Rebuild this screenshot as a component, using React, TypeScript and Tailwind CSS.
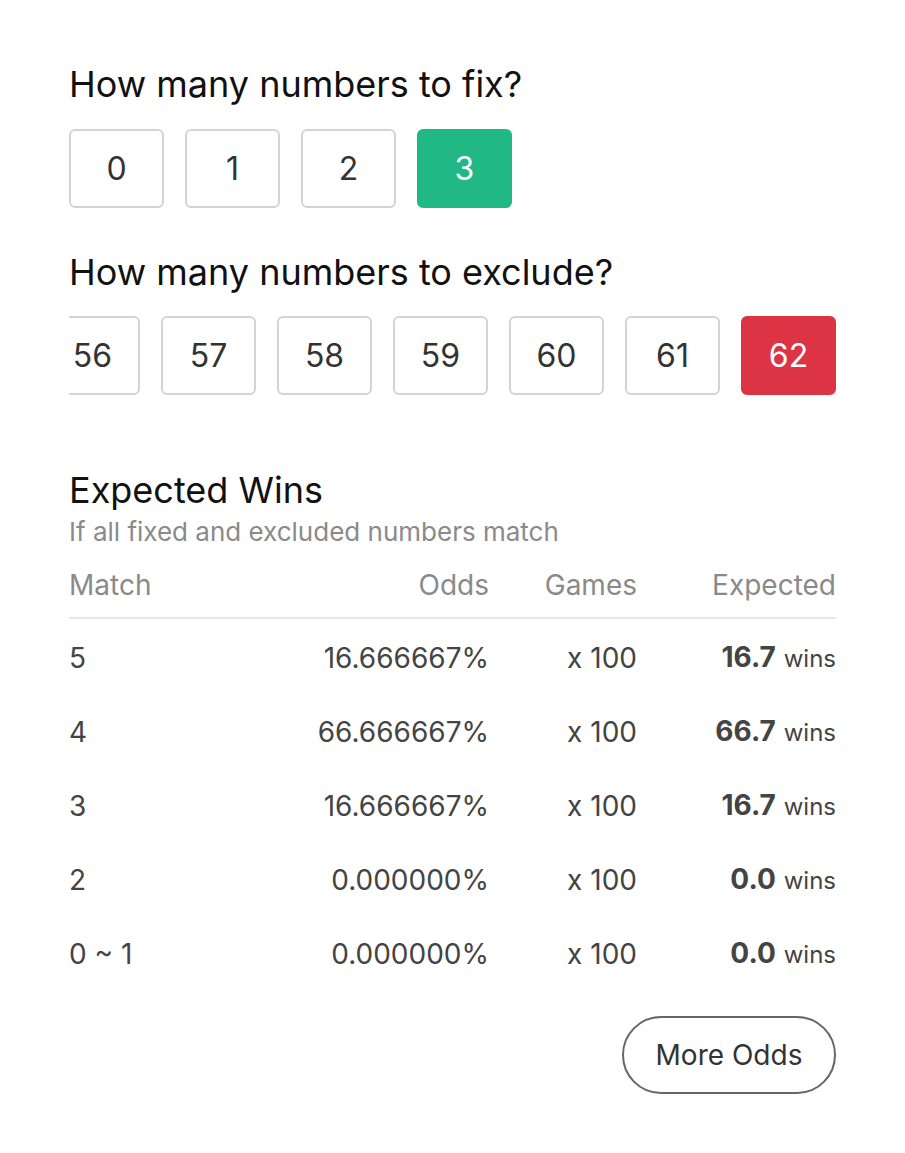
import { useState } from 'react'

const font = { fontFamily: 'Inter, "Noto Sans", sans-serif' }

const rows = [
  { match: '5', odds: '16.666667%', games: 'x 100', expected: '16.7' },
  { match: '4', odds: '66.666667%', games: 'x 100', expected: '66.7' },
  { match: '3', odds: '16.666667%', games: 'x 100', expected: '16.7' },
  { match: '2', odds: '0.000000%', games: 'x 100', expected: '0.0' },
  { match: '0 ~ 1', odds: '0.000000%', games: 'x 100', expected: '0.0' },
]

function NumButton({ n, active, tone, onClick }: { n: number; active: boolean; tone: 'green' | 'red'; onClick: () => void }) {
  const on = tone === 'green' ? 'bg-[#22b886] border-[#22b886] text-white' : 'bg-[#dc3444] border-[#dc3444] text-white'
  return (
    <button
      onClick={onClick}
      className={`flex h-[79px] w-[95px] shrink-0 items-center justify-center rounded-[6px] border-2 text-[32px] ${
        active ? on : 'border-[#d4d4d4] bg-white text-[#333]'
      }`}
    >
      {n}
    </button>
  )
}

export default function App() {
  const [fix, setFix] = useState(3)
  const [exclude, setExclude] = useState(62)
  // only the tail of the 0..62 strip is in view
  const excludeOptions = [56, 57, 58, 59, 60, 61, 62]

  return (
    <div style={font} className="min-h-screen bg-white px-[69px] pt-[62px] text-[#111]">
      <h2 className="text-[36px] leading-[44px]">How many numbers to fix?</h2>
      <div className="mt-[23px] flex gap-[21px]">
        {[0, 1, 2, 3].map(n => (
          <NumButton key={n} n={n} active={fix === n} tone="green" onClick={() => setFix(n)} />
        ))}
      </div>

      <h2 className="mt-[42px] text-[36px] leading-[44px]">How many numbers to exclude?</h2>
      <div className="mt-[22px] flex justify-end gap-[21px] overflow-hidden">
        {excludeOptions.map(n => (
          <NumButton key={n} n={n} active={exclude === n} tone="red" onClick={() => setExclude(n)} />
        ))}
      </div>

      <h3 className="mt-[73px] text-[36px] leading-[44px]">Expected Wins</h3>
      <p className="mt-[4px] text-[26px] leading-[32px] text-[#8a8a8a]">If all fixed and excluded numbers match</p>

      <div className="mt-[19px] text-[28px] leading-[36px]">
        <div className="flex border-b-2 border-[#e6e6e6] pb-[14px] text-[#8a8a8a]">
          <div className="flex-1">Match</div>
          <div className="text-right">Odds</div>
          <div className="w-[148px] text-right">Games</div>
          <div className="w-[199px] text-right">Expected</div>
        </div>
        <div className="pt-[2px] text-[#444]">
          {rows.map(r => (
            <div key={r.match} className="flex h-[74px] items-center">
              <div className="flex-1">{r.match}</div>
              <div className="text-right">{r.odds}</div>
              <div className="w-[148px] text-right">{r.games}</div>
              <div className="w-[199px] text-right">
                <span className="font-bold">{r.expected}</span> <span className="text-[24px]">wins</span>
              </div>
            </div>
          ))}
        </div>
      </div>

      <div className="mt-[25px] flex justify-end">
        <button className="h-[78px] w-[214px] rounded-full border-2 border-[#666] text-[28px] text-[#333]">More Odds</button>
      </div>
    </div>
  )
}
